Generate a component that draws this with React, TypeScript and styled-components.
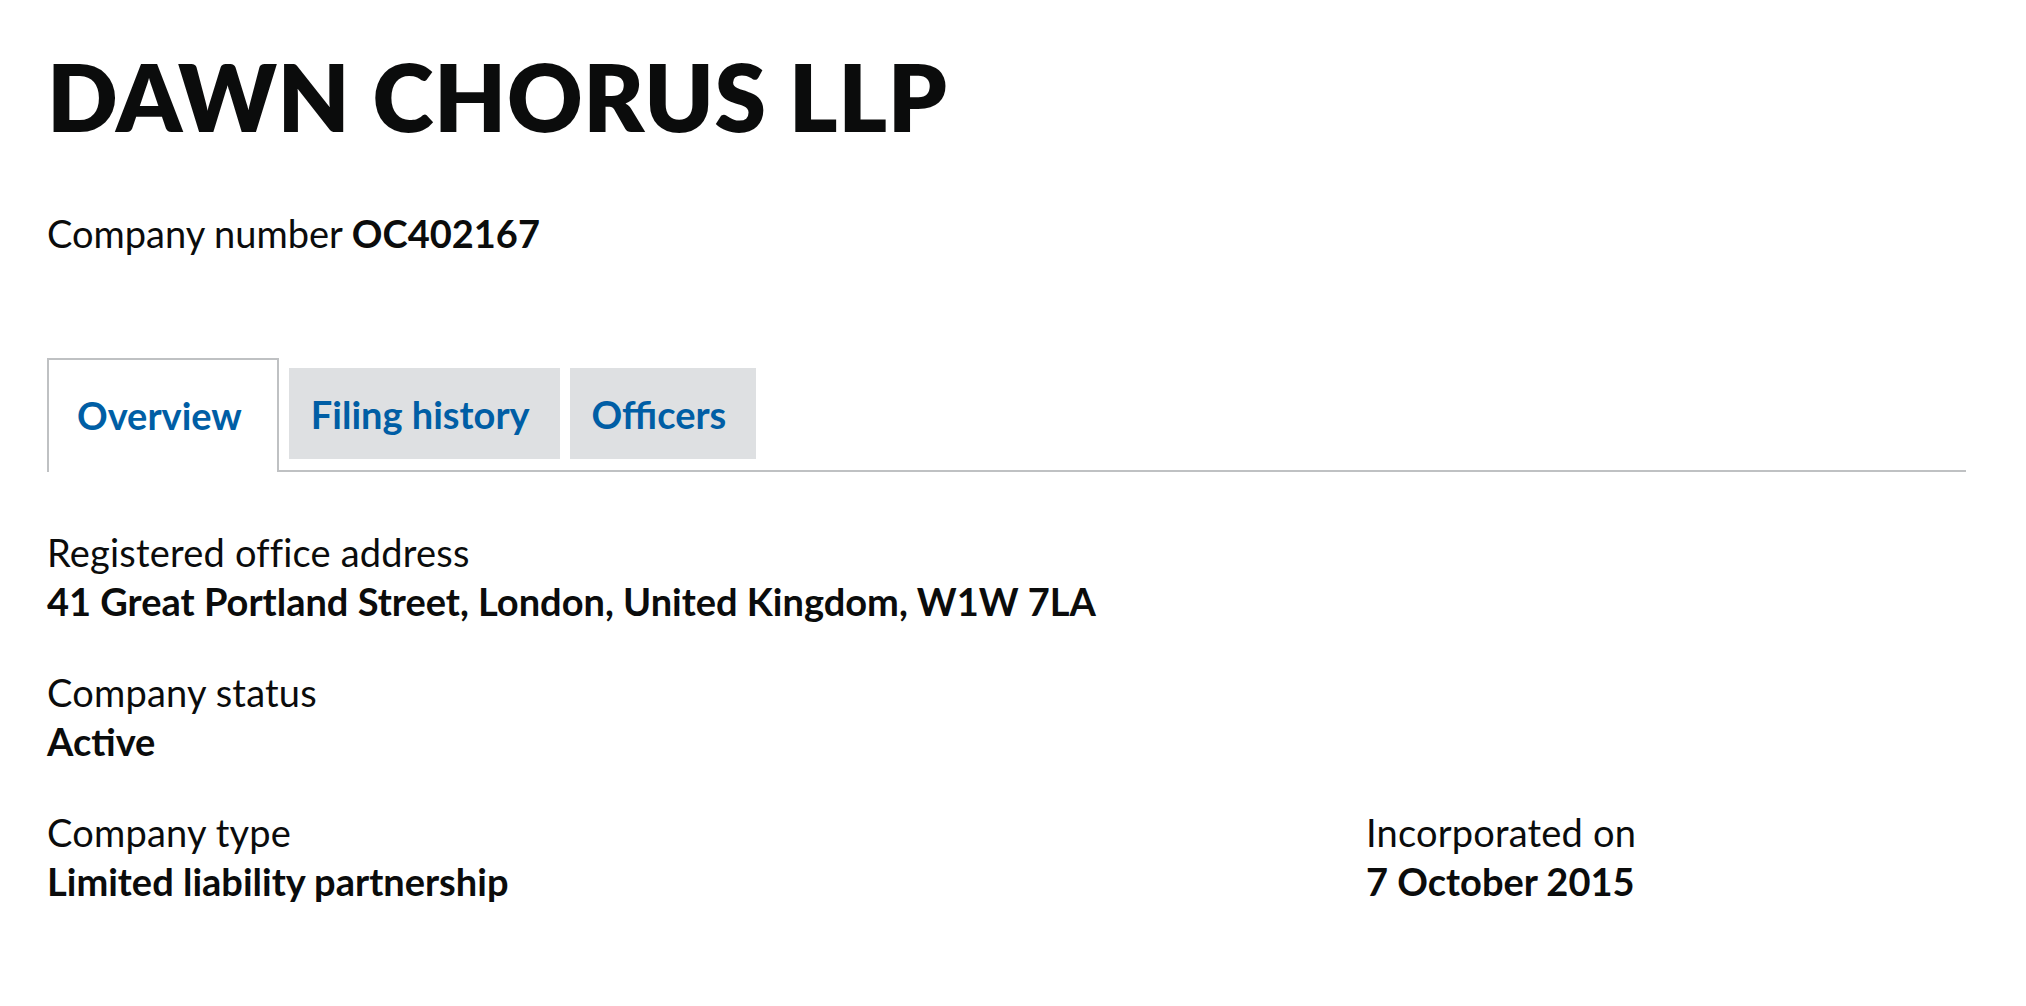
import React from 'react';
import styled, { createGlobalStyle } from 'styled-components';

const GlobalStyle = createGlobalStyle`
  html, body {
    margin: 0;
    padding: 0;
    background: #ffffff;
  }
  body {
    font-family: Lato, "Liberation Sans", Arial, sans-serif;
    color: #0b0c0c;
  }
`;

const Page = styled.main`
  padding: 41px 60px 40px 47px;
`;

const Title = styled.h1`
  margin: 0;
  font-size: 93px;
  line-height: 110px;
  font-weight: 800;
  letter-spacing: 0.6px;
`;

const CompanyNumber = styled.p`
  margin: 58px 0 0;
  font-size: 38px;
  line-height: 49px;
  font-weight: 400;

  strong {
    font-weight: 700;
  }
`;

const TabList = styled.ul`
  list-style: none;
  margin: 100px 0 0;
  padding: 0;
  display: flex;
  align-items: flex-end;
  border-bottom: 2px solid #bfc1c3;
`;

const Tab = styled.li<{ $active?: boolean }>`
  margin-right: 10px;
  display: flex;
  align-items: center;
  box-sizing: border-box;
  font-size: 38px;
  font-weight: 700;
  color: #005ea5;
  ${(p) =>
    p.$active
      ? `
    height: 114px;
    padding: 0 35px 2px 28px;
    background: #ffffff;
    border: 2px solid #bfc1c3;
    border-bottom: none;
    margin-bottom: -2px;
  `
      : `
    height: 91px;
    padding: 0 30px 0 22px;
    background: #dee0e2;
    margin-bottom: 11px;
  `}
`;

const TabLink = styled.a`
  color: inherit;
  text-decoration: none;
  cursor: pointer;
`;

const Details = styled.div`
  margin-top: 56px;
  display: grid;
  grid-template-columns: 1319px 1fr;
  row-gap: 42px;
`;

const Field = styled.dl<{ $wide?: boolean }>`
  margin: 0;
  grid-column: ${(p) => (p.$wide ? '1 / -1' : 'auto')};
`;

const Label = styled.dt`
  font-size: 38px;
  line-height: 49px;
  font-weight: 400;
  letter-spacing: 0.2px;
`;

const Value = styled.dd`
  margin: 0;
  font-size: 38px;
  line-height: 49px;
  font-weight: 700;
`;

const fields = [
  { label: 'Registered office address', value: '41 Great Portland Street, London, United Kingdom, W1W 7LA', wide: true },
  { label: 'Company status', value: 'Active', wide: true },
  { label: 'Company type', value: 'Limited liability partnership' },
  { label: 'Incorporated on', value: '7 October 2015' },
];

const App = () => {
  return (
    <>
      <GlobalStyle />
      <Page>
        <Title>DAWN CHORUS LLP</Title>
        <CompanyNumber>
          Company number <strong>OC402167</strong>
        </CompanyNumber>
        <TabList>
          <Tab $active>
            <TabLink>Overview</TabLink>
          </Tab>
          <Tab>
            <TabLink>Filing history</TabLink>
          </Tab>
          <Tab>
            <TabLink>Officers</TabLink>
          </Tab>
        </TabList>
        <Details>
          {fields.map((f) => (
            <Field key={f.label} $wide={f.wide}>
              <Label>{f.label}</Label>
              <Value>{f.value}</Value>
            </Field>
          ))}
        </Details>
      </Page>
    </>
  );
};

export default App;
